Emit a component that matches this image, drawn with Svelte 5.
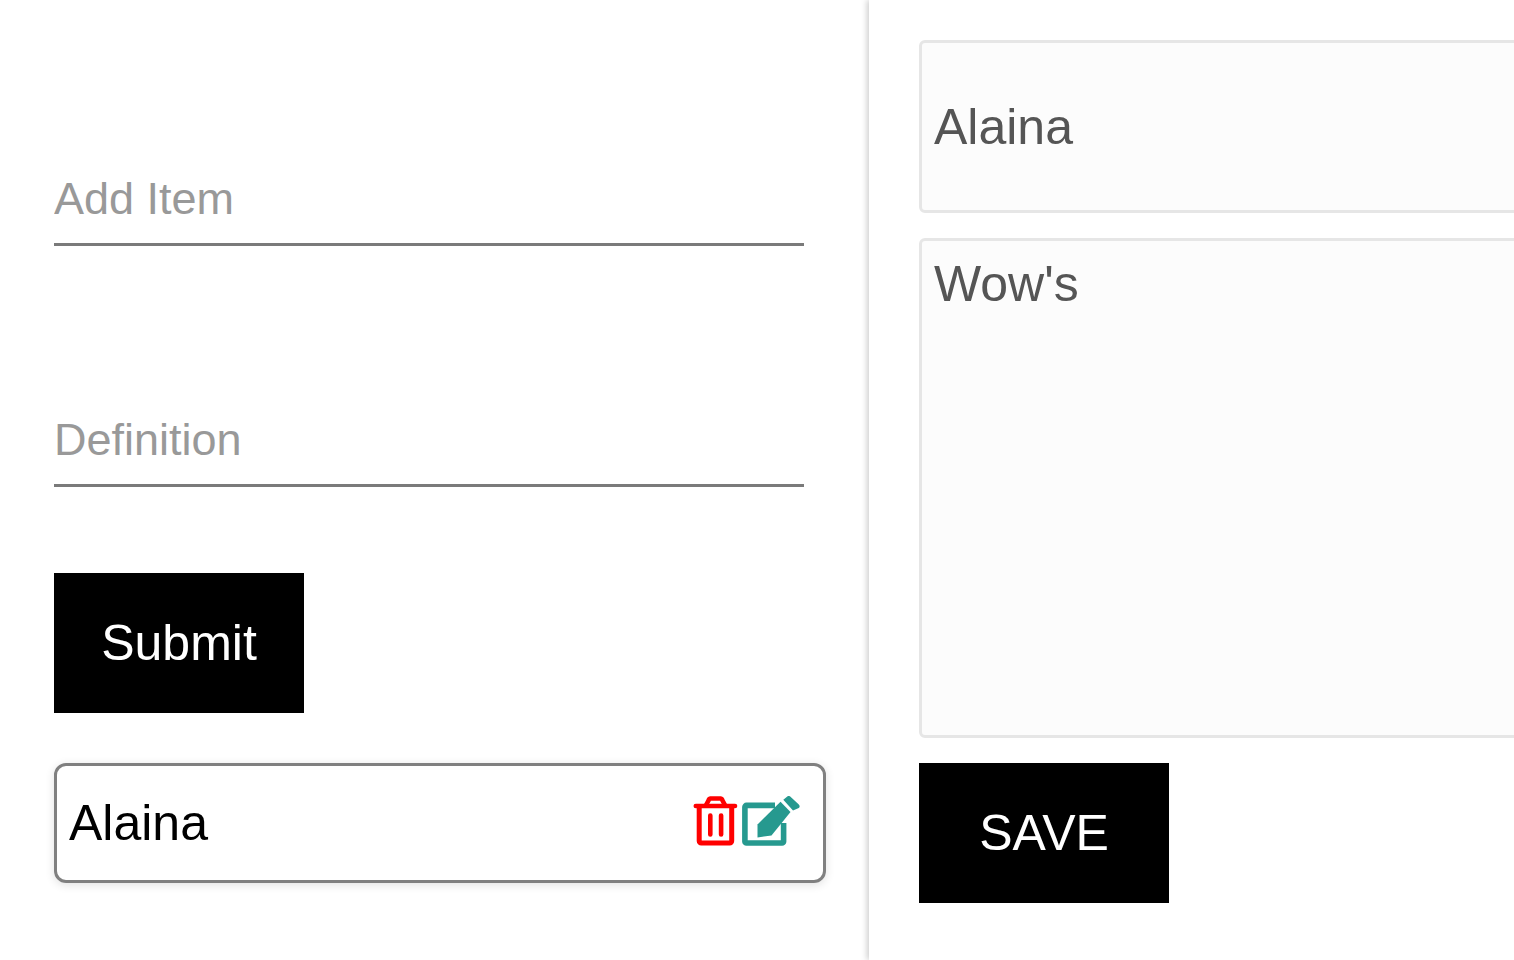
<script>
  let item = $state('');
  let definition = $state('');
  let editName = $state('Alaina');
  let editDefinition = $state("Wow's");
</script>

<main class="page">
  <section class="left">
    <input class="line first" placeholder="Add Item" bind:value={item} />
    <input class="line second" placeholder="Definition" bind:value={definition} />
    <button class="black submit">Submit</button>
    <div class="item">
      <span class="name">Alaina</span>
      <svg class="trash" viewBox="-1 0 45 50" width="45" height="50" aria-label="Delete">
        <path d="M1.800 10H41" fill="none" stroke="#f00" stroke-width="4.600" stroke-linecap="round" />
        <path d="M5.200 11V45a2 2 0 0 0 2 2h28.500a2 2 0 0 0 2-2V11" fill="none" stroke="#f00" stroke-width="5" />
        <path d="M11.500 10L14.500 4.500a2.500 2.500 0 0 1 2-2h10a2.500 2.500 0 0 1 2 2L31.500 10" fill="none" stroke="#f00" stroke-width="4.600" />
        <path d="M16.300 19.500V38.500M27.100 19.500V38.500" fill="none" stroke="#f00" stroke-width="4.600" stroke-linecap="round" />
      </svg>
      <svg class="edit" viewBox="0 0 58 50" width="58" height="50" aria-label="Edit">
        <path d="M33 9.400H4.500a1.600 1.600 0 0 0-1.600 1.600V45.400a1.600 1.600 0 0 0 1.600 1.600H40a1.600 1.600 0 0 0 1.600-1.600V27" fill="none" stroke="#26998f" stroke-width="5.600" />
        <path d="M15.500 28.500L38.500 5.800L48.500 16L29.500 39.500L15.500 41.500Z" fill="#26998f" />
        <path d="M41.300 3.800L45 0.800a2.500 2.500 0 0 1 3.500 0L56.800 8.500a2.500 2.500 0 0 1 0 3.500L51 14.500Z" fill="#26998f" />
      </svg>
    </div>
  </section>
  <section class="right">
    <input class="field" bind:value={editName} />
    <textarea class="field area" bind:value={editDefinition}></textarea>
    <button class="black save">SAVE</button>
  </section>
</main>

<style>
  :global(body) {
    margin: 0;
    background: #fff;
    font-family: "Liberation Sans", Arial, sans-serif;
  }
  .page {
    display: flex;
    width: 1514px;
    height: 960px;
    overflow: hidden;
  }
  .left {
    flex: 0 0 869px;
    box-sizing: border-box;
    padding: 155px 0 0 54px;
    display: flex;
    flex-direction: column;
    align-items: flex-start;
  }
  .line {
    box-sizing: border-box;
    width: 750px;
    height: 91px;
    padding: 0;
    border: 0;
    border-bottom: 3px solid #7a7a7a;
    outline: 0;
    background: transparent;
    font: 45px "Liberation Sans", Arial, sans-serif;
  }
  .line::placeholder {
    color: #999;
    opacity: 1;
  }
  .second {
    margin-top: 150px;
  }
  .black {
    width: 250px;
    height: 140px;
    border: 0;
    padding: 0;
    background: #000;
    color: #fff;
    font: 50px "Liberation Sans", Arial, sans-serif;
  }
  .submit {
    margin-top: 86px;
  }
  .item {
    box-sizing: border-box;
    margin-top: 50px;
    width: 772px;
    height: 120px;
    border: 3px solid #808080;
    border-radius: 12px;
    padding: 0 23px 0 12px;
    display: flex;
    align-items: center;
    box-shadow: 0 2px 10px rgba(0, 0, 0, 0.12);
    font-size: 50px;
    color: #000;
  }
  .name {
    flex: 1;
  }
  .trash {
    margin-right: 4px;
    display: block;
  }
  .edit {
    display: block;
  }
  .trash, .edit {
    margin-top: -4px;
  }
  .right {
    flex: 0 0 800px;
    box-sizing: border-box;
    padding: 40px 0 0 50px;
    display: flex;
    flex-direction: column;
    align-items: flex-start;
    box-shadow: -2px 0 6px rgba(0, 0, 0, 0.2);
    background: #fff;
  }
  .field {
    box-sizing: border-box;
    width: 750px;
    height: 173px;
    padding: 0 12px;
    border: 3px solid #e6e6e6;
    border-radius: 6px;
    outline: 0;
    background: #fcfcfc;
    color: #555;
    font: 50px "Liberation Sans", Arial, sans-serif;
  }
  .area {
    height: 500px;
    margin-top: 25px;
    padding-top: 14px;
    resize: none;
    display: block;
  }
  .save {
    margin-top: 25px;
  }
</style>
